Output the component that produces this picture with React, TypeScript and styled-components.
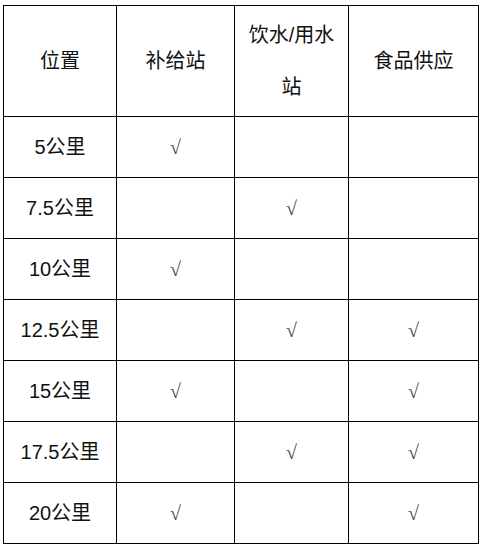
import styled, { createGlobalStyle } from "styled-components";

const GlobalStyle = createGlobalStyle`
  html, body {
    margin: 0;
    padding: 0;
    background: #ffffff;
  }
`;

const Table = styled.table`
  margin: 5px 0 0 3px;
  width: 475px;
  border-collapse: collapse;
  table-layout: fixed;
  font-family: "Liberation Sans", "Noto Sans CJK SC", sans-serif;
  font-size: 20px;
  color: #111;
`;

const HeadRow = styled.tr`
  height: 111px;
`;

const BodyRow = styled.tr`
  height: 61px;
`;

const Cell = styled.td`
  border: 1px solid #000;
  padding: 3px 8px;
  text-align: center;
  vertical-align: middle;
  line-height: 52px;
`;

const HeadCell = styled(Cell).attrs({ as: "th" })`
  font-weight: normal;
`;

const Tick = styled.span`
  font-family: "Liberation Serif", "DejaVu Serif", serif;
  font-size: 20px;
  color: #444;
`;

const columns = [
  { title: "位置", width: 113 },
  { title: "补给站", width: 118 },
  { title: "饮水/用水站", width: 114 },
  { title: "食品供应", width: 130 },
];

interface Stop {
  place: string;
  supply: boolean;
  water: boolean;
  food: boolean;
}

const stops: Stop[] = [
  { place: "5公里", supply: true, water: false, food: false },
  { place: "7.5公里", supply: false, water: true, food: false },
  { place: "10公里", supply: true, water: false, food: false },
  { place: "12.5公里", supply: false, water: true, food: true },
  { place: "15公里", supply: true, water: false, food: true },
  { place: "17.5公里", supply: false, water: true, food: true },
  { place: "20公里", supply: true, water: false, food: true },
];

function Mark({ on }: { on: boolean }) {
  return on ? <Tick>√</Tick> : null;
}

function App() {
  return (
    <>
      <GlobalStyle />
      <Table>
        <colgroup>
          {columns.map((c) => (
            <col key={c.title} style={{ width: c.width }} />
          ))}
        </colgroup>
        <thead>
          <HeadRow>
            {columns.map((c) => (
              <HeadCell key={c.title}>{c.title}</HeadCell>
            ))}
          </HeadRow>
        </thead>
        <tbody>
          {stops.map((s) => (
            <BodyRow key={s.place}>
              <Cell>{s.place}</Cell>
              <Cell>
                <Mark on={s.supply} />
              </Cell>
              <Cell>
                <Mark on={s.water} />
              </Cell>
              <Cell>
                <Mark on={s.food} />
              </Cell>
            </BodyRow>
          ))}
        </tbody>
      </Table>
    </>
  );
}

export default App;
